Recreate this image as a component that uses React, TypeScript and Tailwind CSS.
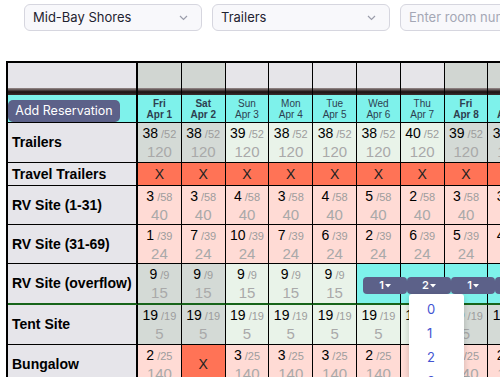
import React from "react";

type Day = { d: string; n: string; we: boolean };

const days: Day[] = [
  { d: "Fri", n: "Apr 1", we: true },
  { d: "Sat", n: "Apr 2", we: true },
  { d: "Sun", n: "Apr 3", we: false },
  { d: "Mon", n: "Apr 4", we: false },
  { d: "Tue", n: "Apr 5", we: false },
  { d: "Wed", n: "Apr 6", we: false },
  { d: "Thu", n: "Apr 7", we: false },
  { d: "Fri", n: "Apr 8", we: true },
  { d: "Sat", n: "Apr 9", we: true },
];

type Row = {
  label: string;
  kind: "avail" | "pink" | "closed";
  vals: (number | "X" | "cyan")[];
  cap?: number;
  sub?: number;
  h: string;
  green?: boolean;
};

const rows: Row[] = [
  { label: "Trailers", kind: "avail", vals: [38, 38, 39, 38, 38, 38, 40, 39, 38], cap: 52, sub: 120, h: "h-[40px]" },
  { label: "Travel Trailers", kind: "closed", vals: ["X", "X", "X", "X", "X", "X", "X", "X", "X"], h: "h-[23px]" },
  { label: "RV Site (1-31)", kind: "pink", vals: [3, 3, 4, 3, 4, 5, 2, 3, 3], cap: 58, sub: 40, h: "h-[39px]" },
  { label: "RV Site (31-69)", kind: "pink", vals: [1, 7, 10, 7, 6, 2, 6, 5, 4], cap: 39, sub: 24, h: "h-[39px]" },
  { label: "RV Site (overflow)", kind: "avail", vals: [9, 9, 9, 9, 9, "cyan", "cyan", "cyan", "cyan"], cap: 9, sub: 15, h: "h-[41px]", green: true },
  { label: "Tent Site", kind: "avail", vals: [19, 19, 19, 19, 19, 19, 19, 19, 19], cap: 19, sub: 5, h: "h-[40px]" },
  { label: "Bungalow", kind: "pink", vals: [2, "X", 3, 3, 3, 2, 2, 2, 2], cap: 25, sub: 140, h: "h-[40px]" },
];

function SelectBox({ label }: { label: string }) {
  return (
    <div className="flex h-[27px] w-[178px] shrink-0 items-center justify-between rounded-[6px] border border-[#d6d6df] bg-[#f8f8fb] pl-[8px] pr-[13px] text-[#1f2330]">
      <span>{label}</span>
      <svg width="9" height="6" viewBox="0 0 9 6" fill="none">
        <path d="M1 1l3.5 3.5L8 1" stroke="#9b9dab" strokeWidth="1.2" />
      </svg>
    </div>
  );
}

function Caret() {
  return (
    <svg width="6" height="4" viewBox="0 0 6 4" className="ml-[1px]">
      <path d="M0 0h6L3 3.5z" fill="white" />
    </svg>
  );
}

export default function App() {
  return (
    <div className="relative h-[377px] w-[500px] overflow-hidden bg-white font-['Liberation_Sans',Arial,sans-serif]">
      <div className="flex gap-[10px] pl-[24px] pt-[4px] font-['Inter',sans-serif] text-[13px]">
        <SelectBox label="Mid-Bay Shores" />
        <SelectBox label="Trailers" />
        <div className="flex h-[27px] w-[178px] shrink-0 items-center rounded-[6px] border border-[#d6d6df] bg-[#f8f8fb] px-[8px] text-[#a4a7b5]">
          Enter room number
        </div>
      </div>

      <div className="ml-[6px] mt-[30px] grid w-max grid-cols-[130px_repeat(9,43.8px)] border-l-2 border-t-2 border-black">
        {/* blank header row */}
        <div className="h-[25px] border-r-2 border-black bg-[#e6e5ea]" />
        {days.map((d, i) => (
          <div key={"b" + i} className={`h-[25px] border-r border-black ${d.we ? "bg-[#d1d6d2]" : "bg-[#e6e5e9]"}`} />
        ))}

        {/* dark bar */}
        <div className="h-[7px] border-r-2 border-black bg-[linear-gradient(#9a8d8d,#1b1212_55%,#3a2e2e)]" />
        {days.map((_, i) => (
          <div key={"k" + i} className="h-[7px] border-r border-black bg-[linear-gradient(#9a8d8d,#1b1212_55%,#3a2e2e)]" />
        ))}

        {/* date row */}
        <div className="flex h-[28px] items-end border-b border-r-2 border-black bg-[#7ef2eb]">
          <button className="flex h-[22px] w-[112px] items-center justify-center rounded-[5px] bg-[#5c6189] font-['Inter',sans-serif] text-[12.5px] text-white">
            Add Reservation
          </button>
        </div>
        {days.map((d, i) => (
          <div
            key={"d" + i}
            className={`flex h-[28px] flex-col items-center justify-center border-b border-r border-black bg-[#7ef2eb] text-[10px] leading-[11px] text-[#2d3e50] ${
              d.we ? "font-bold" : ""
            }`}
          >
            <span>{d.d}</span>
            <span>{d.n}</span>
          </div>
        ))}

        {rows.map((r) => (
          <React.Fragment key={r.label}>
            <div
              className={`flex ${r.h} items-center border-r-2 bg-[#e6e5ea] pl-[4px] text-[14px] font-bold text-black ${
                r.green ? "border-b-2 border-b-[#17641a] border-r-black" : "border-b border-black"
              }`}
            >
              {r.label}
            </div>
            {r.vals.map((v, i) => {
              let bg = "bg-[#ffdbd5]";
              if (v === "X") bg = "bg-[#ff7356]";
              else if (v === "cyan") bg = "bg-[#7ef2eb]";
              else if (r.kind === "avail") bg = days[i].we ? "bg-[#d4dad6]" : "bg-[#e9f3e9]";
              const border = r.green ? "border-b-2 border-b-[#17641a] border-r-black" : "border-b border-black";
              return (
                <div key={i} className={`flex ${r.h} flex-col items-center justify-center border-r ${border} ${bg}`}>
                  {v === "X" ? (
                    <span className="text-[14px] text-[#222]">X</span>
                  ) : v === "cyan" ? null : (
                    <>
                      <div className="leading-[18px]">
                        <span className="text-[14px] text-black">{v}</span>
                        <span className="ml-[3px] text-[11px] text-[#9d9d9d]">/{r.cap}</span>
                      </div>
                      <div className="text-[15px] leading-[18px] text-[#a9a9a9]">{r.sub}</div>
                    </>
                  )}
                </div>
              );
            })}
          </React.Fragment>
        ))}
      </div>

      {/* quantity buttons over the overflow row */}
      <div className="absolute left-[363px] top-[277px] flex font-['Inter',sans-serif] text-[11px] font-semibold text-white">
        {["1", "2", "1", "1"].map((q, i) => (
          <div key={i} className="flex h-[17px] w-[44px] items-center justify-center rounded-[4px] bg-[#5c6189]">
            {q}
            <Caret />
          </div>
        ))}
      </div>

      {/* open dropdown */}
      <div className="absolute left-[409px] top-[294px] h-[100px] w-[55px] rounded-[3px] bg-white pt-[4px] font-['Inter',sans-serif] text-[13px] text-[#4355d2] shadow-[0_2px_6px_rgba(0,0,0,0.2)]">
        {["0", "1", "2", "3"].map((o) => (
          <div key={o} className="flex h-[24px] items-center pl-[18px]">
            {o}
          </div>
        ))}
      </div>
    </div>
  );
}
